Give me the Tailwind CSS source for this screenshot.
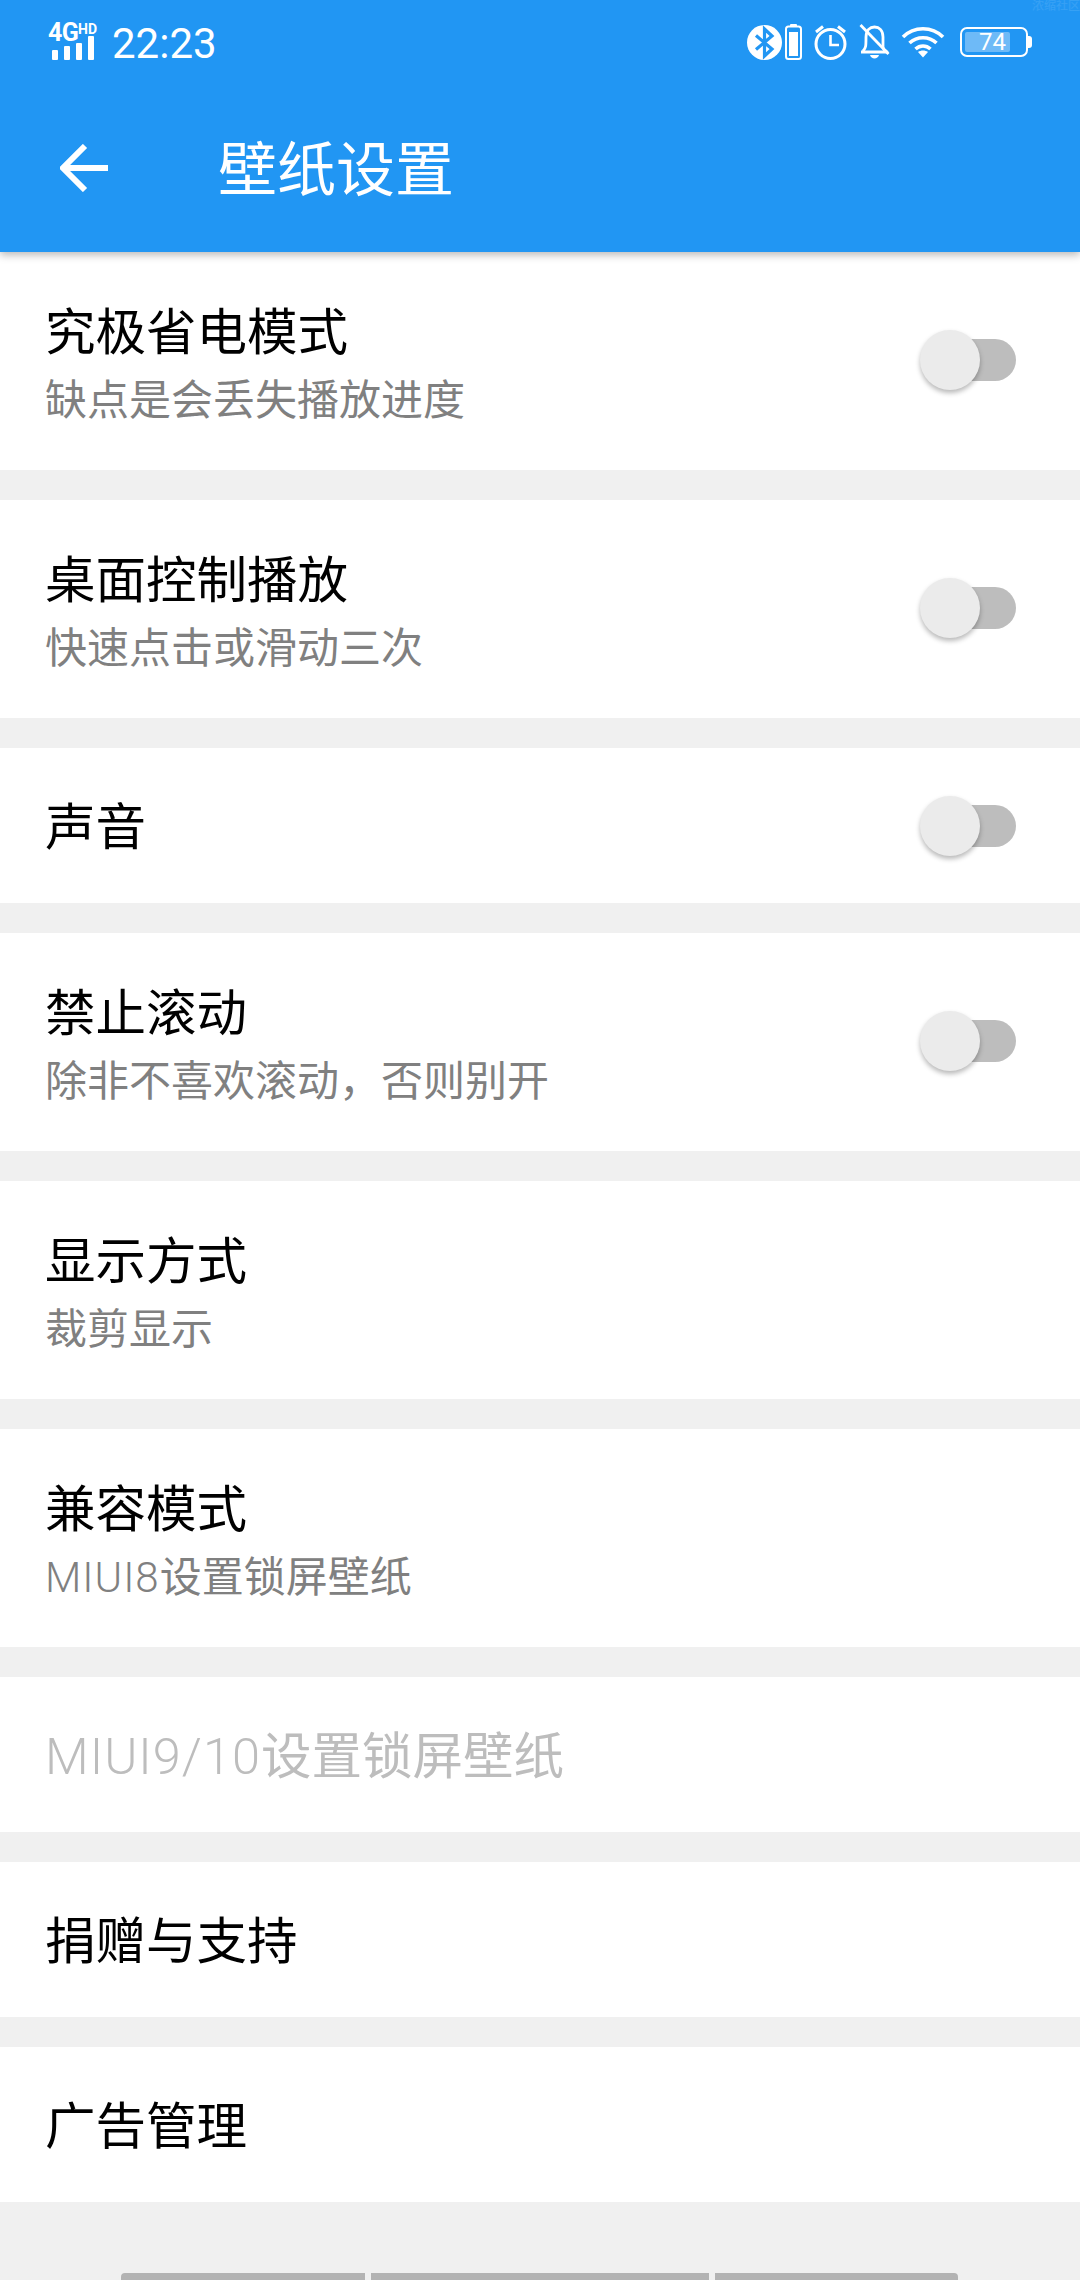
<!doctype html>
<html lang="zh">
<head>
<meta charset="utf-8">
<script src="https://cdn.jsdelivr.net/npm/@tailwindcss/browser@4"></script>
</head>
<body class="m-0">
<div class="relative w-[1080px] h-[2280px] overflow-hidden bg-[#f0f0f0] font-['Roboto','Noto_Sans_CJK_SC',sans-serif]">
  <header class="relative z-10 h-[252px] bg-[#2196f3] text-white shadow-[0_3px_8px_rgba(0,0,0,0.28)]">
    <div class="relative flex h-[84px] items-center pl-[48px] pr-[48px]">
      <div class="relative h-[36px] w-[51px] shrink-0">
        <span class="absolute left-0 top-[-4px] text-[25px] leading-[26px] font-bold tracking-[-0.5px]">4G</span>
        <span class="absolute left-[30px] top-[-2px] text-[14px] leading-[14px] font-bold">HD</span>
        <div class="absolute bottom-0 left-[4px] flex items-end gap-[6px]">
          <i class="block h-[10px] w-[6px] rounded-[1px] bg-white"></i>
          <i class="block h-[14px] w-[6px] rounded-[1px] bg-white"></i>
          <i class="block h-[17px] w-[6px] rounded-[1px] bg-white"></i>
          <i class="block h-[24px] w-[6px] rounded-[1px] bg-white"></i>
        </div>
      </div>
      <span class="ml-[13px] mt-[4px] text-[42px] leading-none">22:23</span>
      <div class="ml-auto flex items-center">
        <svg class="h-[35px] w-[35px]" viewBox="0 0 35 35"><circle cx="17.5" cy="17.5" r="17.5" fill="#fff"/><path d="M9 10.500 L25 24 L17.500 31 V4 L25 11 L9 24.500" fill="none" stroke="#2196f3" stroke-width="3.200"/></svg>
        <svg class="ml-[3px] h-[36px] w-[17px]" viewBox="0 0 17 36"><rect x="5" y="0" width="7" height="3" rx="1" fill="#fff"/><rect x="1" y="2.500" width="15" height="32.500" rx="2.500" fill="none" stroke="#fff" stroke-width="2"/><rect x="4" y="8" width="9" height="24" fill="#fff"/></svg>
        <svg class="ml-[12px] h-[36px] w-[33px]" viewBox="0 0 33 36"><circle cx="16.500" cy="20" r="14.500" fill="none" stroke="#fff" stroke-width="3"/><path d="M16.500 11 V21 H25" fill="none" stroke="#fff" stroke-width="2.600"/><path d="M2 8 L9 2.500 M31 8 L24 2.500" stroke="#fff" stroke-width="3"/></svg>
        <svg class="ml-[12px] h-[36px] w-[31px]" viewBox="0 0 31 36"><path d="M4 27 C7 24 7 22 7 13 C7 6 11 3 15.500 3 C20 3 24 6 24 13 V23 C24 25 25 26 28 28 H2" fill="none" stroke="#fff" stroke-width="2.800" stroke-linejoin="round"/><path d="M1.500 1 L29.500 30" stroke="#fff" stroke-width="2.800"/><path d="M11 31 H20 C19 35.500 12 35.500 11 31Z" fill="#fff"/></svg>
        <svg class="ml-[11px] h-[32px] w-[44px]" viewBox="0 0 44 32"><path d="M2 11 C13 0 31 0 42 11 M8.500 17 C16 10 28 10 35.500 17 M14.500 23 C19 19 25 19 29.500 23" fill="none" stroke="#fff" stroke-width="3.600"/><path d="M17 26 C20 24 24 24 27 26 L22 31.500Z" fill="#fff"/></svg>
        <div class="relative ml-[15px] h-[30px] w-[72px] shrink-0">
          <div class="absolute left-0 top-0 h-[30px] w-[68px] rounded-[7px] border-[2px] border-white"></div>
          <div class="absolute left-[5px] top-[5px] h-[20px] w-[45px] rounded-[2px] bg-white/35"></div>
          <div class="absolute right-0 top-[9px] h-[12px] w-[4px] rounded-r-[3px] bg-white"></div>
          <span class="absolute left-[19px] top-[1px] text-[24px] leading-[28px]">74</span>
        </div>
      </div>
      <span class="absolute right-0 top-[-1px] text-[12px] leading-[14px] text-white/10">浓缩社区</span>
    </div>
    <div class="flex h-[168px] items-center">
      <svg class="ml-[60px] h-[48px] w-[48px] shrink-0" viewBox="0 0 48 48"><path d="M48 24 H4 M25 2 L3 24 L25 46" fill="none" stroke="#fff" stroke-width="6"/></svg>
      <h1 class="ml-[110px] mt-[5px] text-[59px] leading-none font-normal">壁纸设置</h1>
    </div>
  </header>

  <main class="flex flex-col gap-[30px]">
    <div class="flex h-[218px] items-center bg-white pl-[45px] pr-[64px]">
      <div class="flex-1 pt-[5px]"><div class="text-[50.5px] leading-[66px] text-black">究极省电模式</div><div class="mt-[9px] text-[42px] leading-[52px] text-[#808080]">缺点是会丢失播放进度</div></div>
      <div class="relative mt-[-2px] h-[60px] w-[96px] shrink-0"><div class="absolute right-0 top-[9px] h-[42px] w-[84px] rounded-full bg-[#bdbdbd]"></div><div class="absolute left-0 top-0 h-[60px] w-[60px] rounded-full bg-[#ebebeb] shadow-[0_3px_5px_rgba(0,0,0,0.28)]"></div></div>
    </div>
    <div class="flex h-[218px] items-center bg-white pl-[45px] pr-[64px]">
      <div class="flex-1 pt-[5px]"><div class="text-[50.5px] leading-[66px] text-black">桌面控制播放</div><div class="mt-[9px] text-[42px] leading-[52px] text-[#808080]">快速点击或滑动三次</div></div>
      <div class="relative mt-[-2px] h-[60px] w-[96px] shrink-0"><div class="absolute right-0 top-[9px] h-[42px] w-[84px] rounded-full bg-[#bdbdbd]"></div><div class="absolute left-0 top-0 h-[60px] w-[60px] rounded-full bg-[#ebebeb] shadow-[0_3px_5px_rgba(0,0,0,0.28)]"></div></div>
    </div>
    <div class="flex h-[155px] items-center bg-white pl-[45px] pr-[64px]">
      <div class="flex-1 pt-[4px] text-[50.5px] leading-[66px] text-black">声音</div>
      <div class="relative h-[60px] w-[96px] shrink-0"><div class="absolute right-0 top-[9px] h-[42px] w-[84px] rounded-full bg-[#bdbdbd]"></div><div class="absolute left-0 top-0 h-[60px] w-[60px] rounded-full bg-[#ebebeb] shadow-[0_3px_5px_rgba(0,0,0,0.28)]"></div></div>
    </div>
    <div class="flex h-[218px] items-center bg-white pl-[45px] pr-[64px]">
      <div class="flex-1 pt-[5px]"><div class="text-[50.5px] leading-[66px] text-black">禁止滚动</div><div class="mt-[9px] text-[42px] leading-[52px] text-[#808080]">除非不喜欢滚动，否则别开</div></div>
      <div class="relative mt-[-2px] h-[60px] w-[96px] shrink-0"><div class="absolute right-0 top-[9px] h-[42px] w-[84px] rounded-full bg-[#bdbdbd]"></div><div class="absolute left-0 top-0 h-[60px] w-[60px] rounded-full bg-[#ebebeb] shadow-[0_3px_5px_rgba(0,0,0,0.28)]"></div></div>
    </div>
    <div class="flex h-[218px] items-center bg-white pl-[45px] pr-[64px]">
      <div class="flex-1 pt-[5px]"><div class="text-[50.5px] leading-[66px] text-black">显示方式</div><div class="mt-[9px] text-[42px] leading-[52px] text-[#808080]">裁剪显示</div></div>
    </div>
    <div class="flex h-[218px] items-center bg-white pl-[45px] pr-[64px]">
      <div class="flex-1 pt-[5px]"><div class="text-[50.5px] leading-[66px] text-black">兼容模式</div><div class="mt-[9px] text-[42px] leading-[52px] text-[#808080]"><span class="font-light tracking-[1px]">MIUI8</span>设置锁屏壁纸</div></div>
    </div>
    <div class="flex h-[155px] items-center bg-white pl-[45px] pr-[64px]"><div class="pt-[4px] text-[50.5px] leading-[66px] text-[#bdbdbd]"><span class="font-light tracking-[1px]">MIUI9/10</span>设置锁屏壁纸</div></div>
    <div class="flex h-[155px] items-center bg-white pl-[45px] pr-[64px]"><div class="pt-[4px] text-[50.5px] leading-[66px] text-black">捐赠与支持</div></div>
    <div class="flex h-[155px] items-center bg-white pl-[45px] pr-[64px]"><div class="pt-[4px] text-[50.5px] leading-[66px] text-black">广告管理</div></div>
  </main>

  <div class="absolute bottom-0 left-[121px] flex h-[7px] gap-[6px]">
    <div class="w-[244px] rounded-tl-[4px] bg-[#b3b3b3]"></div>
    <div class="w-[338px] bg-[#b3b3b3]"></div>
    <div class="w-[243px] rounded-tr-[4px] bg-[#b3b3b3]"></div>
  </div>
</div>
</body>
</html>
